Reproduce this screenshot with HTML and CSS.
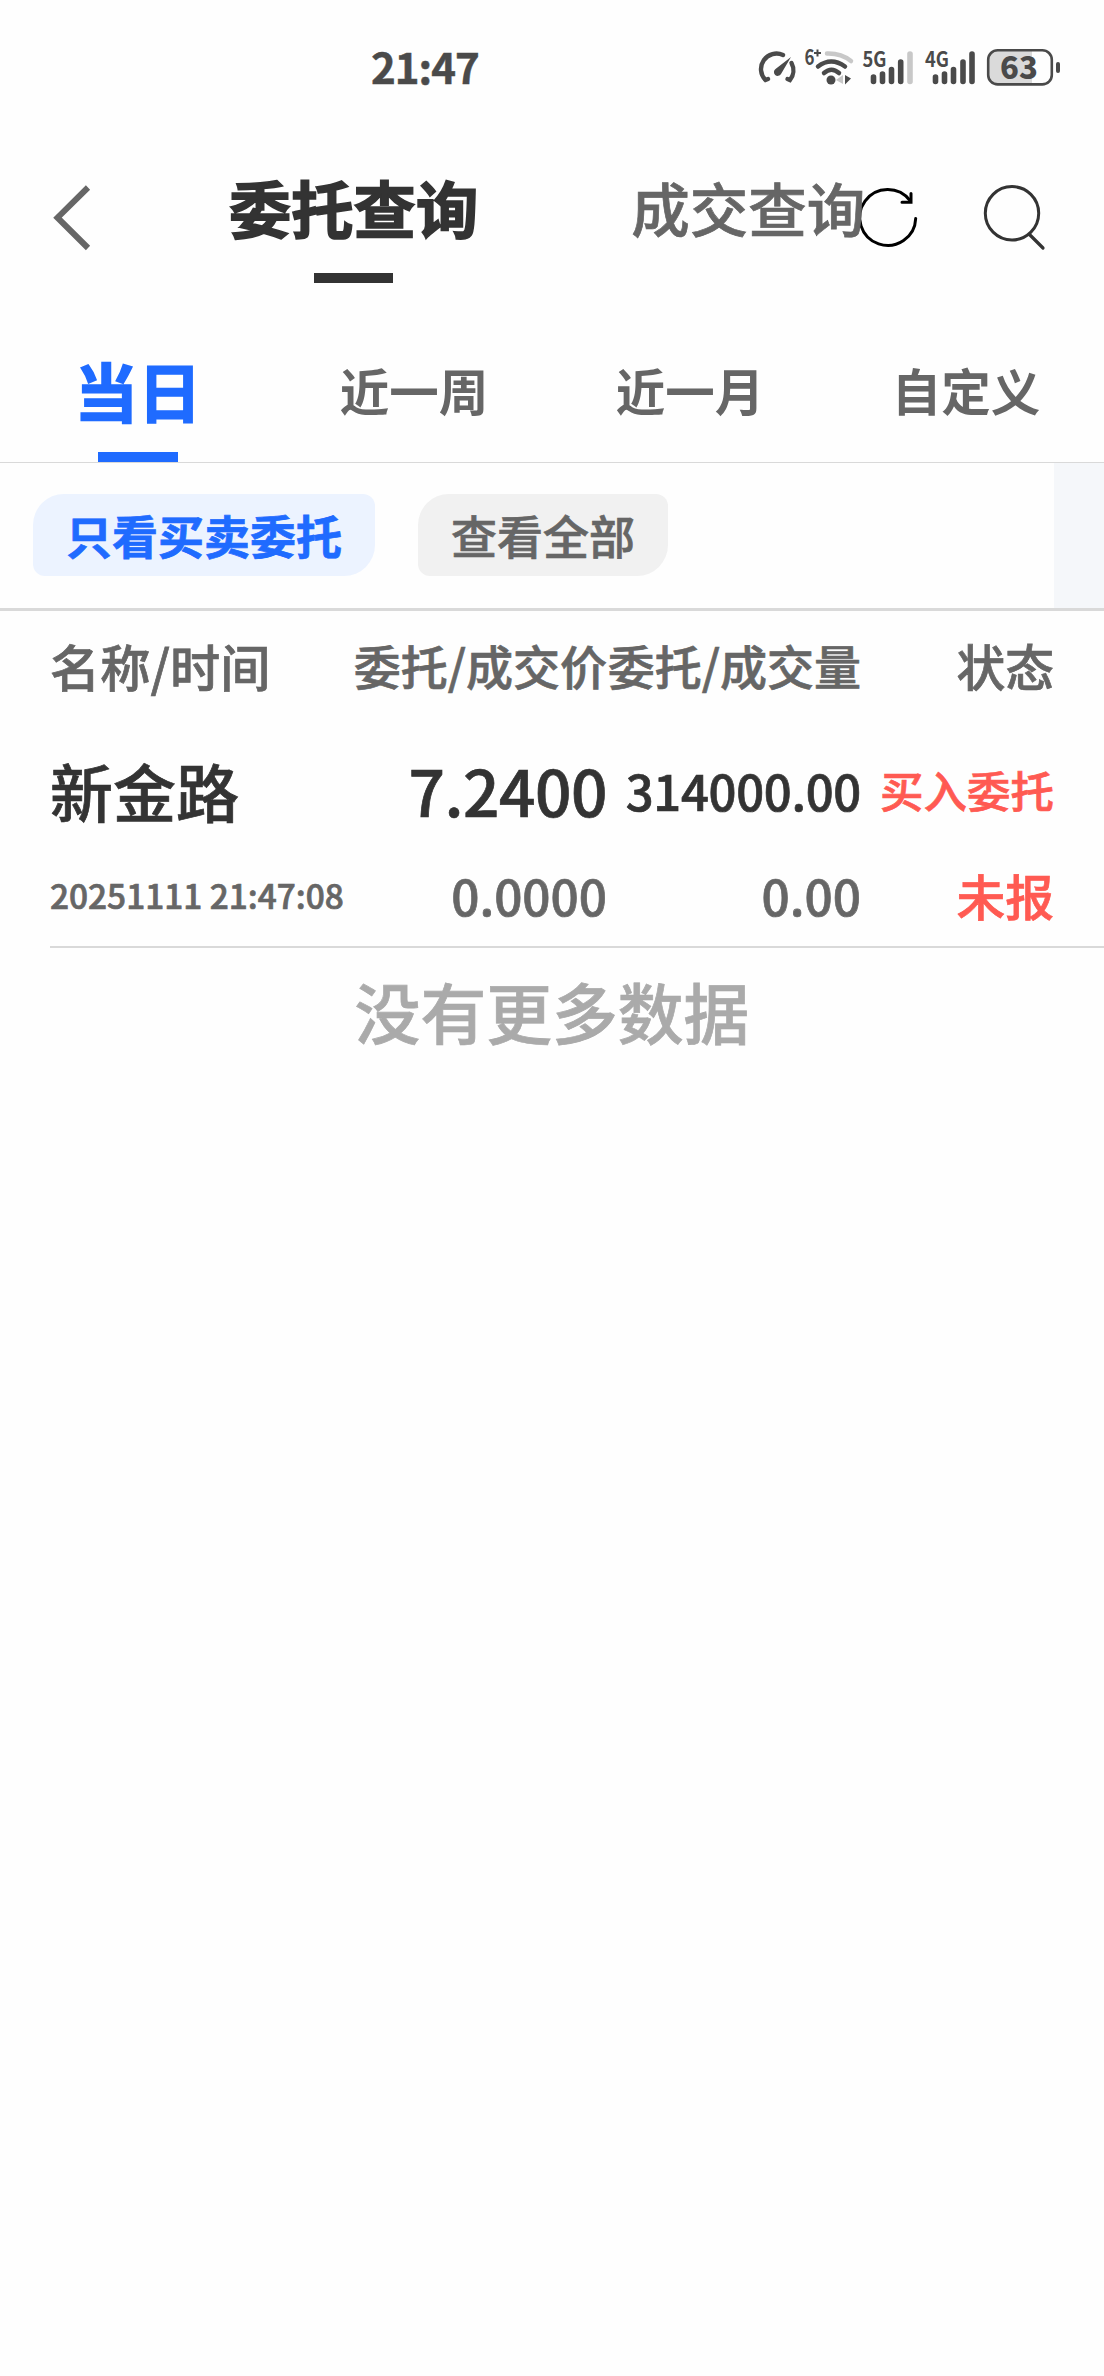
FILE: index.html
```html
<!DOCTYPE html>
<html lang="zh-CN">
<head>
    <meta charset="UTF-8">
    <meta name="viewport" content="width=device-width, initial-scale=1.0">
    <title>委托查询</title>
    <link rel="stylesheet" href="styles.css">
</head>
<body>
    <div class="status-bar">
        <span class="clock">21:47</span>
        <svg class="status-icons" width="320" height="60" viewBox="750 40 320 60">
            <!-- 性能 -->
            <g fill="none" stroke="#4a4a4a" stroke-width="4.4" stroke-linecap="round">
                <path d="M768 79 l-2.500 1 A15.500 15.500 0 0 1 783 55"/>
                <path d="M787.500 79 l2.500 1 A15.500 15.500 0 0 0 791.500 63"/>
            </g>
            <path d="M791 57 L781 74 A3.800 3.800 0 1 1 775.500 69 Z" fill="#4a4a4a"/>
            <!-- WiFi -->
            <g fill="none" stroke-width="4.500" stroke-linecap="round">
                <path d="M827 53.500 Q841 53 851 61" stroke="#c8c8c8"/>
                <path d="M818 66.500 Q831 56.500 845 66.500" stroke="#4a4a4a"/>
                <path d="M824 73 Q831.500 66.500 839 73" stroke="#4a4a4a"/>
            </g>
            <circle cx="831" cy="80" r="4.500" fill="#4a4a4a"/>
            <path d="M843 75 V84 L836 80 Z" fill="#c8c8c8"/>
            <path d="M845 75 L851 78.500 L845 84.500 Z" fill="#4a4a4a"/>
            <text class="net" x="804.500" y="65" textLength="10" lengthAdjust="spacingAndGlyphs">6</text>
            <path d="M817.500 49.500 v7 M814 53 h7" stroke="#4a4a4a" stroke-width="2"/>
            <!-- 信号 -->
            <text class="net" x="862.500" y="67" textLength="24" lengthAdjust="spacingAndGlyphs">5G</text>
            <g stroke="#4a4a4a" stroke-width="5.600" stroke-linecap="round">
                <path d="M873.500 77 V81.500 M882.500 74 V81.500 M891.500 69.500 V81.500 M900.700 62 V81.500"/>
                <path d="M910 54 V81.500" stroke="#c8c8c8"/>
            </g>
            <text class="net" x="925" y="67" textLength="24" lengthAdjust="spacingAndGlyphs">4G</text>
            <path d="M935.500 77 V81.500 M944.500 74 V81.500 M953.500 69.500 V81.500 M963 62 V81.500 M972 54 V81.500" stroke="#4a4a4a" stroke-width="5.600" stroke-linecap="round"/>
            <!-- 电池 -->
            <path d="M1032 51 H997 a8.500 8.500 0 0 0 -8.500 8.500 V75 a8.500 8.500 0 0 0 8.500 8.500 H1032 Z" fill="#dadada"/>
            <rect x="988.200" y="50.200" width="63.600" height="34.200" rx="9.500" fill="none" stroke="#4a4a4a" stroke-width="2.600"/>
            <path d="M1058 64 V71" stroke="#4a4a4a" stroke-width="4" stroke-linecap="round"/>
            <text class="battery" x="1019" y="79" text-anchor="middle">63</text>
        </svg>
    </div>

    <header class="nav-bar">
        <svg class="back" width="60" height="80" viewBox="44 177 60 80">
            <path d="M88 187.500 L57.500 217.700 L88 248" fill="none" stroke="#666" stroke-width="6"/>
        </svg>
        <h1 class="nav-title active">委托查询</h1>
        <h1 class="nav-title">成交查询</h1>
        <svg class="actions" width="210" height="80" viewBox="850 177 210 80">
            <g fill="none" stroke-linecap="round">
                <path d="M916.700 218.500 A28 28 0 1 1 911 200.500" stroke="#000" stroke-width="3"/>
                <path d="M912 193.500 V202.300 H903" stroke="#000" stroke-width="3"/>
                <circle cx="1013" cy="213.300" r="26.700" stroke="#333" stroke-width="3"/>
                <path d="M1030.500 234.500 L1044 248" stroke="#333" stroke-width="3.200"/>
            </g>
        </svg>
    </header>

    <nav class="tabs">
        <a class="tab active">当日</a>
        <a class="tab">近一周</a>
        <a class="tab">近一月</a>
        <a class="tab">自定义</a>
    </nav>

    <div class="filters">
        <div class="filter-list">
            <button class="chip active">只看买卖委托</button>
            <button class="chip">查看全部</button>
        </div>
    </div>

    <main>
        <div class="row table-head">
            <span class="big">名称/时间</span>
            <span>委托/成交价</span>
            <span>委托/成交量</span>
            <span class="state">状态</span>
        </div>
        <div class="order">
            <div class="row order-top">
                <span class="name">新金路</span>
                <span class="price">7.2400</span>
                <span class="amount">314000.00</span>
                <span class="side red">买入委托</span>
            </div>
            <div class="row order-bottom">
                <span class="time">20251111 21:47:08</span>
                <span>0.0000</span>
                <span>0.00</span>
                <span class="state red">未报</span>
            </div>
        </div>
        <p class="no-more">没有更多数据</p>
    </main>
</body>
</html>
```
FILE: styles.css
```css
* {
    margin: 0;
    padding: 0;
    box-sizing: border-box;
}

body {
    font-family: "Noto Sans CJK SC", sans-serif;
    background: #fefefe;
    color: #666;
    min-height: 2376px;
    font-weight: 500;
    -webkit-text-stroke: 0.7px currentColor;
}

svg {
    -webkit-text-stroke: 0;
}

/* 状态栏 */
.status-bar {
    height: 136px;
    padding: 38px 34px 36px 371px;
    display: flex;
    justify-content: space-between;
}

.status-icons {
    margin-top: 2px;
}

.clock {
    font-size: 42px;
    line-height: 56px;
    font-weight: 700;
    letter-spacing: -1px;
    color: #4a4a4a;
    -webkit-text-stroke: 0.5px currentColor;
}

.net {
    font-size: 21px;
    font-weight: 700;
    fill: #4a4a4a;
}

.battery {
    font-size: 31px;
    font-weight: 900;
    fill: #4a4a4a;
}

/* 顶部导航 */
.nav-bar {
    height: 190px;
    padding: 41px 44px 0;
    display: flex;
    align-items: flex-start;
}

.nav-title {
    position: relative;
    z-index: 1;
    margin-left: 168px;
    font-size: 58.5px;
    line-height: 60px;
    font-weight: 500;
    white-space: nowrap;
}

.nav-title.active {
    margin-left: 125px;
    margin-right: -15px;
    font-size: 62.3px;
    font-weight: 700;
    color: #333;
    -webkit-text-stroke: 1.6px currentColor;
}

.nav-title.active::after {
    content: "";
    display: block;
    width: 79px;
    height: 10px;
    margin: 36px auto 0;
    background: #333;
}

.actions {
    margin-left: -16px;
    flex-shrink: 0;
}

/* 日期标签 */
.tabs {
    height: 137px;
    display: grid;
    grid-template-columns: repeat(4, 1fr);
    border-bottom: 1px solid #d9d9d9;
}

.tab {
    display: flex;
    flex-direction: column;
    align-items: center;
    justify-content: space-between;
    padding-top: 26px;
    font-size: 49.5px;
    line-height: 75px;
    font-weight: 700;
    -webkit-text-stroke: 0;
}

.tab.active {
    font-size: 63.5px;
    color: #1f6bff;
    -webkit-text-stroke: 1.6px currentColor;
}

.tab.active::after {
    content: "";
    width: 80px;
    height: 10px;
    background: #1f6bff;
}

/* 筛选 */
.filters {
    height: 148px;
    padding-right: 50px;
    background: #f5f7fa;
    border-bottom: 3px solid #d9d9d9;
}

.filter-list {
    height: 100%;
    padding: 31px 33px;
    display: flex;
    align-items: flex-start;
    gap: 43px;
    background: #fefefe;
}

.chip {
    height: 82px;
    padding: 0 33px 3px;
    border: none;
    border-radius: 31px 12px;
    background: #f1f1f1;
    color: #666;
    font-family: inherit;
    font-size: 46px;
    font-weight: 500;
    line-height: 78px;
    -webkit-text-stroke: 0.7px currentColor;
}

.chip.active {
    background: #ecf3ff;
    color: #1f6bff;
    font-weight: 700;
}

/* 委托列表 */
.row {
    display: grid;
    grid-template-columns: 300px 257px 254px 193px;
    padding: 0 50px;
    align-items: center;
    text-align: right;
    white-space: nowrap;
}

.row span:first-child {
    text-align: left;
}

.table-head {
    height: 106px;
    padding-top: 2px;
    font-size: 47px;
    line-height: 80px;
}

.table-head .big {
    font-size: 50.2px;
}

.order-top {
    height: 144px;
    color: #333;
}

.order-bottom {
    height: 68px;
    font-size: 49.5px;
    line-height: 60px;
    margin-bottom: 17px;
}

.name {
    font-size: 63px;
}

.price {
    font-size: 64px;
    letter-spacing: -0.5px;
}

.amount {
    font-size: 49px;
    letter-spacing: -0.3px;
}

.side {
    font-size: 43.5px;
}

.time {
    font-size: 33.4px;
}

.state {
    font-size: 48.8px;
}

.red {
    color: #ff5a52;
}

.order::after {
    content: "";
    display: block;
    height: 2px;
    margin-left: 50px;
    background: #d9d9d9;
}

.no-more {
    padding-top: 15px;
    text-align: center;
    font-size: 65.8px;
    line-height: 96px;
    color: #aaa;
}
```
